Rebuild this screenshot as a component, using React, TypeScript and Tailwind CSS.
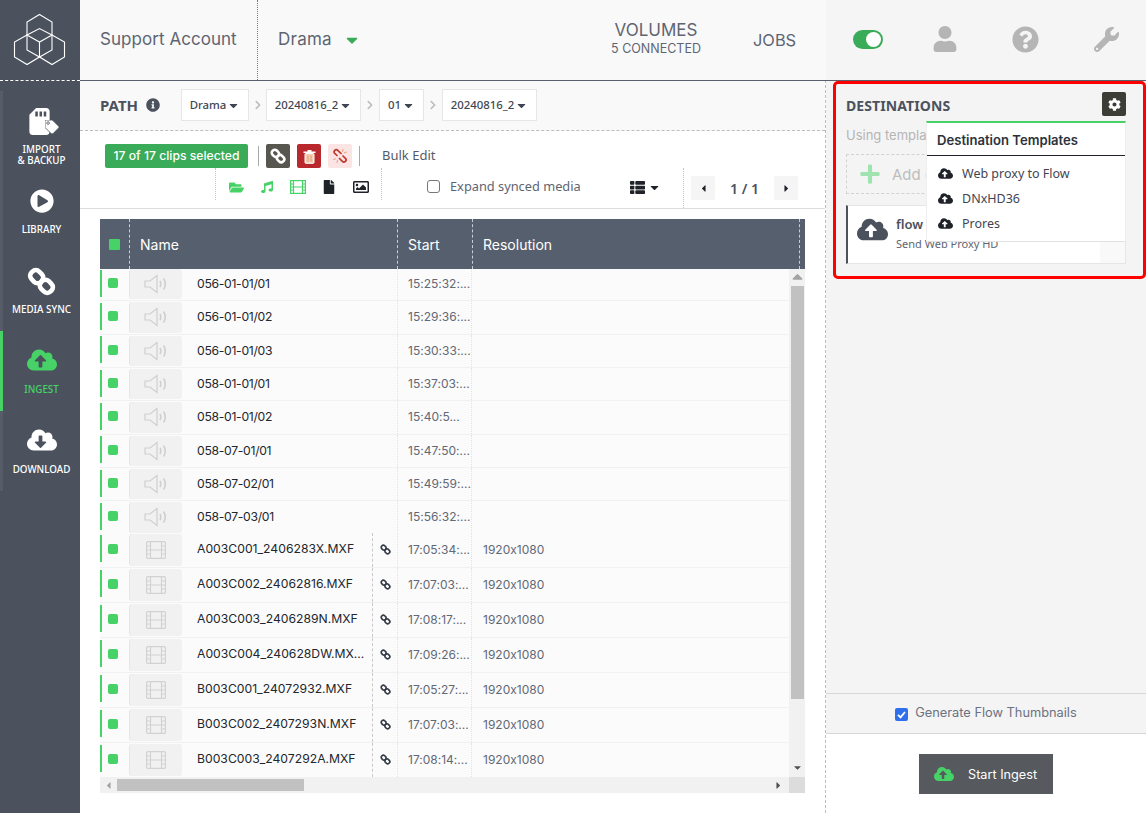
import React from "react";
import {
  FaCaretDown, FaCaretLeft, FaCaretRight, FaChevronRight, FaCloudDownloadAlt, FaCloudUploadAlt, FaCog, FaFile, FaFolderOpen,
  FaRegImage, FaInfoCircle, FaMusic, FaPlayCircle, FaPlus, FaQuestionCircle, FaSdCard, FaTag, FaThList, FaUser, FaWrench,
} from "react-icons/fa";

const MONT = "font-['Inter','Noto_Sans',sans-serif] [font-feature-settings:'calt'_0]";
const ALT = "font-['Noto_Sans','Open_Sans',sans-serif]";

function Logo() {
  return (
    <svg width="80" height="80" viewBox="0 0 80 80" fill="none" stroke="#ffffff" strokeWidth="1.1">
      <path d="M39.5 14.5L52 22V50L39.5 57L27 50V22Z" />
      <path d="M27 35L14.5 42V57L27 64.5L39.5 57L52 64.5L64.5 57V42L52 35" />
      <path d="M27 35L39.5 28.5L52 35L39.5 42ZM39.5 42V57" />
    </svg>
  );
}

function Chain({ size = 14, weight = 3.6 }: { size?: number; weight?: number }) {
  return (
    <svg width={size} height={size} viewBox="0 0 24 24" fill="none" stroke="currentColor" strokeWidth={weight}>
      <rect x="2.5" y="3.5" width="11" height="9" rx="4" transform="rotate(45 8 8)" />
      <rect x="10.5" y="11.5" width="11" height="9" rx="4" transform="rotate(45 16 16)" />
    </svg>
  );
}

function Unlink() {
  return (
    <svg width="16" height="16" viewBox="0 0 16 16" fill="none" strokeLinecap="round">
      <path d="M5 7.5L2.8 5.4a2.1 2.1 0 0 1 3-3L9 5.5" stroke="#c0392b" strokeWidth="1.7" />
      <path d="M7.5 10.5L10.4 13.4a2.1 2.1 0 0 0 3-3L11 8" stroke="#c0392b" strokeWidth="1.7" />
      <path d="M11 1.5L10.4 3.5M14.4 4L12.4 4.8M1.6 11.5L3.6 10.8M5 14.4L5.6 12.4" stroke="#e8a48c" strokeWidth="1.1" />
    </svg>
  );
}

function Trash() {
  return (
    <svg width="13" height="15" viewBox="0 0 13 15">
      <path d="M0.5 2.5H12.5V4H0.5ZM4.5 1H8.5V2.5H4.5Z" fill="#ffffff" />
      <rect x="2" y="4.5" width="9" height="9.8" rx="0.8" fill="#f2cdb0" stroke="#ffffff" strokeWidth="1" />
      <path d="M5 6.5V12.5M8 6.5V12.5" stroke="#d69a78" strokeWidth="0.9" />
    </svg>
  );
}

function Speaker() {
  return (
    <svg width="24" height="20" viewBox="0 0 24 20" fill="none" stroke="#cfcfcf" strokeWidth="1.2">
      <path d="M1 7H6L13 1.5V18.5L6 13H1Z" />
      <path d="M16 7C17 8.5 17 11.5 16 13M19.5 4.5C21.8 7.5 21.8 12.5 19.5 15.5" strokeWidth="1.6" />
    </svg>
  );
}

function FilmOutline() {
  return (
    <svg width="20" height="18" viewBox="0 0 20 18" fill="none" stroke="#d2d2d2" strokeWidth="1.2">
      <rect x="0.6" y="0.6" width="18.8" height="16.8" rx="1" />
      <path d="M4.5 0.6V17.4M15.5 0.6V17.4M4.5 9H15.5M0.6 5H4.5M0.6 9H4.5M0.6 13H4.5M15.5 5H19.4M15.5 9H19.4M15.5 13H19.4" />
    </svg>
  );
}

function NavItem({ label, active, icon }: { label: React.ReactNode; active?: boolean; icon: React.ReactNode }) {
  return (
    <div
      className={`h-[80px] flex flex-col items-center justify-start pt-[14px] border-l-[3px] ${
        active ? "border-[#46d267] text-[#46d267]" : "border-[#565d69] text-white"
      }`}
    >
      <div className="h-[32px] flex items-center justify-center">{icon}</div>
      <div className={`${ALT} mt-[7px] text-[9.8px] leading-[11px] font-medium text-center`}>{label}</div>
    </div>
  );
}

function Crumb({ label, w }: { label: string; w: string }) {
  return (
    <div className={`${ALT} ${w} h-[32px] border border-[#e6e6e6] bg-white flex items-center justify-center gap-[1px] text-[11.4px] font-medium text-[#3f4652]`}>
      {label}
      <FaCaretDown size={13} />
    </div>
  );
}

function CrumbChevron({ w }: { w: string }) {
  return (
    <div className={`${w} flex justify-center text-[#bdbdbd]`}>
      <FaChevronRight size={10} />
    </div>
  );
}

const audio = ["056-01-01/01|15:25:32:...", "056-01-01/02|15:29:36:...", "056-01-01/03|15:30:33:...", "058-01-01/01|15:37:03:...", "058-01-01/02|15:40:5...", "058-07-01/01|15:47:50:...", "058-07-02/01|15:49:59:...", "058-07-03/01|15:56:32:..."].map((s) => s.split("|"));
const video = [
  ["A003C001_2406283X.MXF", "17:05:34:..."],
  ["A003C002_24062816.MXF", "17:07:03:..."],
  ["A003C003_2406289N.MXF", "17:08:17:..."],
  ["A003C004_240628DW.MX...", "17:09:26:..."],
  ["B003C001_24072932.MXF", "17:05:27:..."],
  ["B003C002_2407293N.MXF", "17:07:03:..."],
  ["B003C003_2407292A.MXF", "17:08:14:..."],
];

function Row({ name, start, isVideo }: { name: string; start: string; isVideo?: boolean }) {
  return (
    <div className={`${isVideo ? "h-[35px]" : "h-[33.33px]"} flex items-stretch bg-[#fbfbfb] border-b border-[#f1f1f1] ${MONT}`}>
      <div className="w-[29px] shrink-0 flex items-center pb-[2px]">
        <div className="w-[2px] bg-[#46d267] h-[27px]" />
        <div className="ml-[6px] w-[10px] h-[10px] rounded-[2px] bg-[#46d267]" />
      </div>
      <div className="w-[53px] shrink-0 py-[1px]">
        <div className="h-full rounded-[3px] bg-[#f1f1f1] border-l border-dotted border-[#dcdcdc] flex items-center justify-center">
          {isVideo ? <FilmOutline /> : <Speaker />}
        </div>
      </div>
      <div className={`${isVideo ? "w-[191px] border-r border-dashed border-[#c9c9c9] text-[12.2px]" : "w-[215px] text-[12.2px] tracking-[-0.3px]"} shrink-0 pl-[15px] flex items-center text-[#22262d] whitespace-nowrap overflow-hidden`}>
        {name}
      </div>
      {isVideo && (
        <div className="w-[24px] shrink-0 flex items-center justify-center text-[#333a45]">
          <Chain size={11} weight={3.6} />
        </div>
      )}
      <div className="w-[75px] shrink-0 border-l border-r border-dotted border-[#e2e2e2] pl-[10px] flex items-center text-[12px] text-[#616876] whitespace-nowrap">
        {start}
      </div>
      <div className="pl-[11px] flex items-center text-[12px] text-[#616876]">{isVideo ? "1920x1080" : ""}</div>
    </div>
  );
}

export default function App() {
  return (
    <div className="relative w-[1146px] h-[813px] overflow-hidden flex bg-white">
      <aside className="w-[80px] shrink-0 bg-[#4b525e] flex flex-col">
        <div className="h-[81px] border-b border-dashed border-white mb-[10px]">
          <Logo />
        </div>
        <NavItem
          label={<>IMPORT<br />&amp; BACKUP</>}
          icon={
            <div className="relative -ml-[4px]">
              <FaSdCard size={27} />
              <FaTag size={14} className="absolute -right-[6px] bottom-[1px] text-white stroke-[#4b525e] stroke-[30]" />
            </div>
          }
        />
        <NavItem label="LIBRARY" icon={<FaPlayCircle size={24} />} />
        <NavItem label="MEDIA SYNC" icon={<Chain size={29} weight={3.8} />} />
        <NavItem active label="INGEST" icon={<FaCloudUploadAlt size={30} className="-mt-[3px]" />} />
        <NavItem label="DOWNLOAD" icon={<FaCloudDownloadAlt size={30} className="-mt-[3px]" />} />
      </aside>

      <main className="w-[746px] shrink-0 flex flex-col border-r border-dashed border-[#bdbdbd]">
        <header className={`h-[81px] shrink-0 -mr-px flex items-center bg-[#f9f9f9] border-b border-[#5a606b] text-[#5e6572] ${MONT}`}>
          <div className="w-[178px] h-full pl-[20px] flex items-center text-[17px] tracking-[0.05px] border-r border-dotted border-[#777]">Support Account</div>
          <div className="pl-[20px] flex items-center text-[17px] tracking-[0.25px]">
            Drama
            <FaCaretDown size={18} className="ml-[11px] text-[#3aab58]" />
          </div>
          <div className="ml-auto w-[110px] flex flex-col items-center mr-[42px] -mt-[2px]">
            <div className="text-[17px] leading-[18px]">VOLUMES</div>
            <div className="text-[12.5px] leading-[19px]">5 CONNECTED</div>
          </div>
          <div className="w-[73px] text-[16.4px]">JOBS</div>
        </header>

        <div className="h-[50px] shrink-0 bg-[#f9f9f9] border-b border-dashed border-[#bdbdbd] pl-[20px] flex items-center pb-[1px]">
          <div className={`${ALT} text-[15px] font-bold text-[#4b525e] w-[46px]`}>PATH</div>
          <FaInfoCircle size={14} className="text-[#4b525e]" />
          <div className="ml-[21px] flex items-center">
            <Crumb label="Drama" w="w-[68px]" />
            <CrumbChevron w="w-[17px]" />
            <Crumb label="20240816_2" w="w-[95px]" />
            <CrumbChevron w="w-[18px]" />
            <Crumb label="01" w="w-[45px]" />
            <CrumbChevron w="w-[18px]" />
            <Crumb label="20240816_2" w="w-[95px]" />
          </div>
        </div>

        <div className="h-[78px] shrink-0 border-b border-[#dcdcdc] bg-white">
          <div className="flex items-center h-[24px] mt-[13px]">
            <div className={`${MONT} ml-[25px] w-[143px] h-[24px] rounded-[2px] bg-[#3aab58] text-white text-[12.2px] font-medium flex items-center justify-center pt-[1px]`}>
              17 of 17 clips selected
            </div>
            <div className="ml-[10px] w-px h-[20px] bg-[#aaa]" />
            <div className="ml-[7px] w-[24px] h-[24px] rounded-[2px] bg-[#57574f] text-white flex items-center justify-center"><Chain size={16} weight={3.8} /></div>
            <div className="ml-[7px] w-[24px] h-[24px] rounded-[2px] bg-[#b9282d] flex items-center justify-center"><Trash /></div>
            <div className="ml-[7px] w-[24px] h-[24px] rounded-[2px] bg-[#fbe4e4] flex items-center justify-center"><Unlink /></div>
            <div className="ml-[7px] w-px h-[20px] bg-[#aaa]" />
            <div className={`${ALT} ml-[22px] text-[13px] text-[#555c68]`}>Bulk Edit</div>
          </div>
          <div className="flex items-start h-[40px]">
            <div className="ml-[135px] w-[167px] h-[32px] border-l border-r border-dotted border-[#c4c4c4] flex items-center pl-[13px] pt-[6px]">
              <FaFolderOpen size={15} className="text-[#46d267]" />
              <FaMusic size={12} className="ml-[17px] text-[#46d267]" />
              <svg width="16" height="14" viewBox="0 0 16 14" fill="none" stroke="#46d267" strokeWidth="1.2" className="ml-[17px]">
                <rect x="0.6" y="0.6" width="14.8" height="12.8" />
                <path d="M3.5 0.6V13.4M12.5 0.6V13.4M3.5 7H12.5M0.6 4H3.5M0.6 7H3.5M0.6 10H3.5M12.5 4H15.4M12.5 7H15.4M12.5 10H15.4" />
              </svg>
              <FaFile size={14} className="ml-[16px] text-[#1f2228]" />
              <FaRegImage size={16} className="ml-[17px] text-[#1f2228]" />
            </div>
            <div className="ml-[45px] mt-[12px] w-[13px] h-[13px] rounded-[3px] border border-[#767676] bg-white" />
            <div className={`${ALT} ml-[10px] mt-[9px] w-[180px] text-[12.8px] leading-[18px] text-[#5e6572]`}>Expand synced media</div>
            <FaThList size={15} className="mt-[12px] text-[#1f2228]" />
            <FaCaretDown size={13} className="ml-[3px] mt-[13px] text-[#1f2228]" />
            <div className="ml-[22px] h-[40px] border-l border-dotted border-[#c4c4c4] pl-[7px] flex items-start pt-[8px]">
              <div className="w-[24px] h-[24px] rounded-[2px] bg-[#f5f5f5] flex items-center justify-center text-[#1f2228]"><FaCaretLeft size={11} /></div>
              <div className={`${ALT} w-[59px] h-[24px] flex items-center justify-center text-[14px] font-semibold text-[#4b525e]`}>1 / 1</div>
              <div className="w-[24px] h-[24px] rounded-[2px] bg-[#f5f5f5] flex items-center justify-center text-[#1f2228]"><FaCaretRight size={11} /></div>
            </div>
          </div>
        </div>

        <div className="mx-[20px] mt-[10px] w-[705px] flex flex-col">
          <div className={`${MONT} h-[50px] bg-[#565f6e] text-white text-[14px] flex items-stretch`}>
            <div className="w-[30px] flex items-center justify-center border-r border-dashed border-[#c9ced6]">
              <div className="w-[11px] h-[11px] rounded-[1px] bg-[#46d267]" />
            </div>
            <div className="w-[268px] pl-[10px] flex items-center border-r border-dashed border-[#c9ced6]">Name</div>
            <div className="w-[75px] pl-[10px] flex items-center border-r border-dashed border-[#c9ced6]">Start</div>
            <div className="w-[327px] pl-[10px] flex items-center border-r border-dashed border-[#c9ced6]">Resolution</div>
          </div>
          <div className="h-[508px] flex overflow-hidden">
            <div className="w-[689px] overflow-hidden">
              <div className="-mt-[1px]">
                {audio.map(([n, s]) => <Row key={n} name={n} start={s} />)}
                <div className="-mt-[2px]">
                  {video.map(([n, s]) => <Row key={n} name={n} start={s} isVideo />)}
                </div>
              </div>
            </div>
            <div className="w-[16px] bg-[#f1f1f1] flex flex-col items-center">
              <FaCaretDown size={11} className="rotate-180 text-[#a3a3a3] h-[17px]" />
              <div className="w-[13px] h-[413px] bg-[#c1c1c1]" />
              <div className="mt-[60px] h-[17px] flex items-center"><FaCaretDown size={11} className="text-[#505050]" /></div>
            </div>
          </div>
          <div className="h-[16px] flex bg-[#f1f1f1]">
            <div className="w-[17px] flex items-center justify-center text-[#a3a3a3]"><FaCaretLeft size={11} /></div>
            <div className="w-[187px] my-[2px] bg-[#c1c1c1]" />
            <div className="w-[485px] flex items-center justify-end pr-[5px] text-[#505050]"><FaCaretRight size={11} /></div>
            <div className="w-[16px] bg-[#dcdcdc]" />
          </div>
        </div>
      </main>

      <section className="flex-1 flex flex-col">
        <div className="h-[81px] shrink-0 bg-[#f5f5f5] border-b border-[#5a606b] flex items-center pb-[2px]">
          <div className="ml-[27px] w-[30px] h-[19px] rounded-full bg-[#3aab58] flex items-center justify-end pr-[2px]">
            <div className="w-[15px] h-[15px] rounded-full bg-white" />
          </div>
          <FaUser size={26} className="ml-[49px] text-[#b5b5b5]" />
          <FaQuestionCircle size={27} className="ml-[54px] text-[#b5b5b5]" />
          <FaWrench size={25} className="ml-[55px] text-[#b5b5b5]" />
        </div>
        <div className="flex-1 bg-[#f4f4f4] px-[20px] pt-[11px]">
          <div className="flex items-center justify-between h-[24px]">
            <div className={`${ALT} text-[14px] font-bold tracking-[0.1px] pt-[2px] text-[#4b525e]`}>DESTINATIONS</div>
            <div className="w-[24px] h-[24px] rounded-[2px] bg-[#3d3d38] flex items-center justify-center text-white"><FaCog size={13} /></div>
          </div>
          <div className={`${MONT} mt-[8px] w-[80px] overflow-hidden whitespace-nowrap text-[13px] leading-[22px] text-[#b5b5b5]`}>Using template</div>
          <div className="mt-[8px] h-[40px] w-[280px] border border-dashed border-[#d2d2d2] flex items-center pl-[12px]">
            <FaPlus size={22} className="text-[#9fe3b0]" />
            <span className={`${MONT} ml-[11px] pt-[2px] w-[34px] overflow-hidden whitespace-nowrap text-[15px] text-[#bdbdbd]`}>Add destination</span>
          </div>
          <div className="mt-[11px] h-[59px] w-[280px] border border-[#e6e6e6] border-l-2 border-l-[#4b525e] bg-white flex">
            <div className="w-[40px] pl-[9px] pt-[8px] text-[#4b525e]"><FaCloudUploadAlt size={31} /></div>
            <div className="flex-1 pl-[8px] pt-[8px]">
              <div className={`${ALT} text-[13px] font-semibold leading-[20px] text-[#4b525e]`}>flow</div>
              <div className={`${ALT} text-[11px] leading-[20px] text-[#5e6572]`}>Send Web Proxy HD</div>
            </div>
            <div className="w-[25px] bg-[#f9f9f9]" />
          </div>
        </div>
        <div className="h-[41px] shrink-0 bg-[#f4f4f4] border-t border-b border-[#d6d6d6] flex items-center justify-center">
          <svg width="13" height="13" viewBox="0 0 13 13" className="mt-[2px]">
            <rect width="13" height="13" rx="2" fill="#2f6fed" />
            <path d="M3 6.8L5.5 9.3L10 4" stroke="#fff" strokeWidth="1.8" fill="none" />
          </svg>
          <span className={`${MONT} ml-[7px] -mt-[1px] text-[12.8px] text-[#6b7280]`}>Generate Flow Thumbnails</span>
        </div>
        <div className="h-[79px] shrink-0 bg-white flex items-start justify-center pt-[20px]">
          <div className={`${MONT} w-[134px] h-[40px] bg-[#565a5e] text-white text-[12.7px] flex items-center pl-[15px]`}>
            <FaCloudUploadAlt size={20} className="text-[#46d267]" />
            <span className="ml-[14px] pt-[1px]">Start Ingest</span>
          </div>
        </div>
      </section>

      <div className="absolute left-[926px] top-[121px] w-[200px] h-[121px] bg-white border-t-2 border-t-[#46d267] border-x border-b border-x-[#eeeeee] border-b-[#e2e2e2]">
        <div className={`${MONT} h-[33px] border-b border-[#1f2228] pl-[10px] pt-[4px] flex items-center text-[13.1px] font-semibold text-[#2d323a]`}>Destination Templates</div>
        <div className={`${ALT} pt-[6px] text-[12.5px] text-[#3f4652]`}>
          {["Web proxy to Flow", "DNxHD36", "Prores"].map((t) => (
            <div key={t} className="h-[25px] pl-[11px] flex items-center">
              <FaCloudUploadAlt size={15} className="text-[#1f2228] -mt-[2px]" />
              <span className="ml-[9px]">{t}</span>
            </div>
          ))}
        </div>
      </div>
      <div className="absolute left-[833px] top-[81px] w-[313px] h-[198px] border-[3px] border-[#ff0000] rounded-[5px] pointer-events-none" />
    </div>
  );
}
